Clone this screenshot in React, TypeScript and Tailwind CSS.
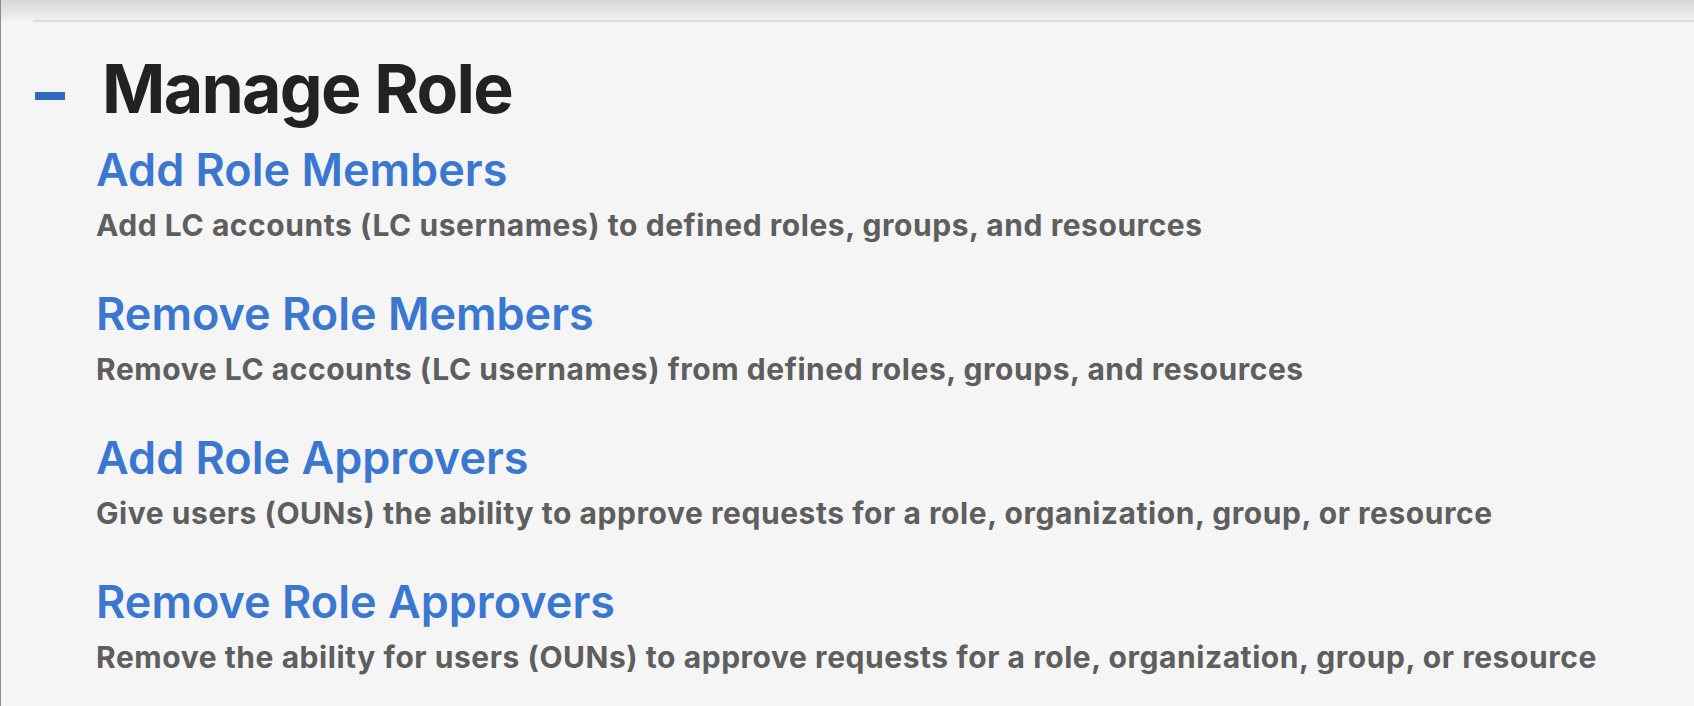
const items = [
  {
    title: "Add Role Members",
    text: "Add LC accounts (LC usernames) to defined roles, groups, and resources",
  },
  {
    title: "Remove Role Members",
    text: "Remove LC accounts (LC usernames) from defined roles, groups, and resources",
  },
  {
    title: "Add Role Approvers",
    text: "Give users (OUNs) the ability to approve requests for a role, organization, group, or resource",
  },
  {
    title: "Remove Role Approvers",
    text: "Remove the ability for users (OUNs) to approve requests for a role, organization, group, or resource",
  },
];

export default function App() {
  return (
    <div className="min-h-screen overflow-hidden border-l border-[#8c8c8c] bg-[#f5f5f5] font-['Inter',sans-serif]">
      <div className="h-5 bg-gradient-to-b from-[#d6d6d6] to-[#f1f1f1]" />
      <div className="ml-8 h-[2px] bg-[#dddddd]" />

      <section className="pl-[34px] pt-[32px]">
        <div className="flex items-start">
          <span className="mt-[38px] h-2 w-[30px] bg-[#3168c0]" />
          <h1 className="ml-[37px] text-[68px] leading-[68px] font-bold tracking-[-0.025em] text-[#222222]">
            Manage Role
          </h1>
        </div>

        <ul className="mt-[25px] flex flex-col gap-[51px] pl-[61px]">
          {items.map((item) => (
            <li key={item.title}>
              <a
                href="#"
                className="block text-[45px] leading-[45px] font-semibold text-[#3a77d1]"
              >
                {item.title}
              </a>
              <p className="mt-[18px] text-[30px] leading-[30px] font-bold tracking-[0.55px] text-[#5e5e5e]">
                {item.text}
              </p>
            </li>
          ))}
        </ul>
      </section>
    </div>
  );
}
